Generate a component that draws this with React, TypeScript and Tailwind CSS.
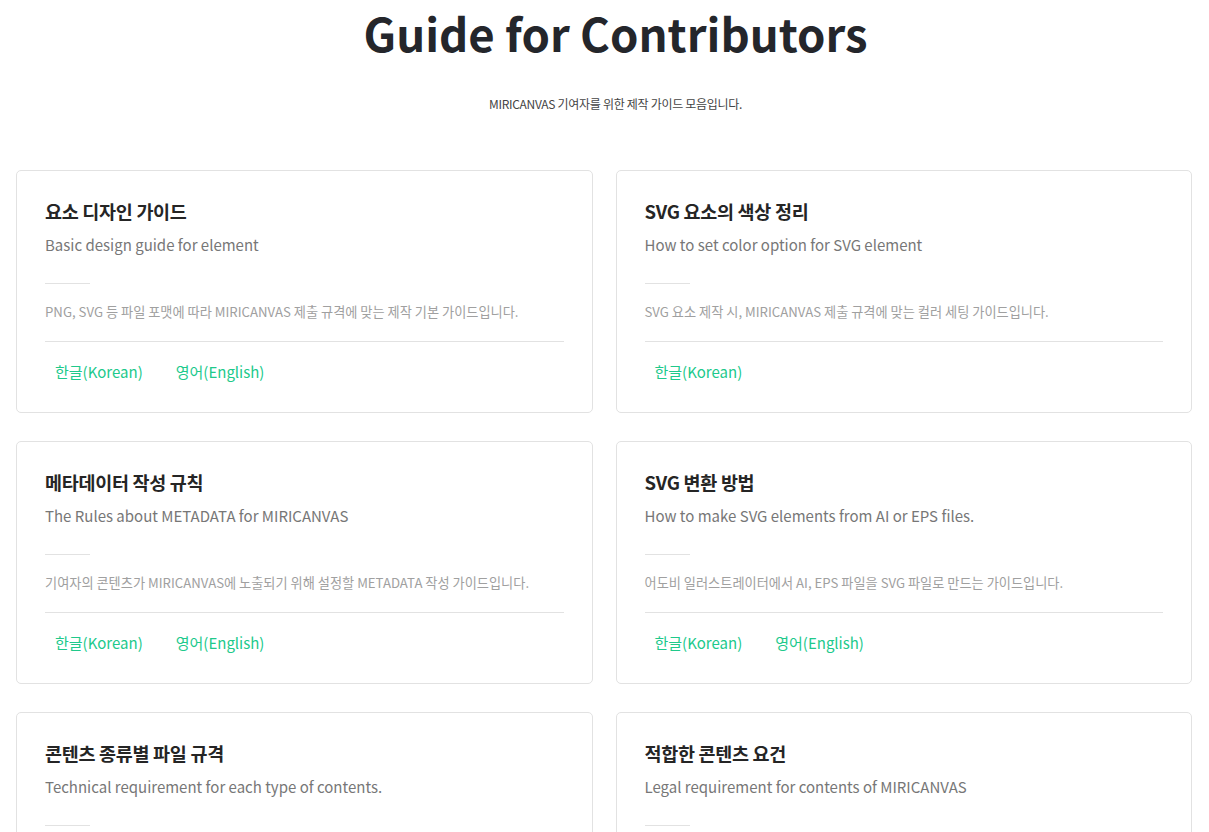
import React from "react";

type Guide = {
  title: string;
  subtitle: string;
  desc: string;
  links: string[];
};

const guides: Guide[] = [
  {
    title: "요소 디자인 가이드",
    subtitle: "Basic design guide for element",
    desc: "PNG, SVG 등 파일 포맷에 따라 MIRICANVAS 제출 규격에 맞는 제작 기본 가이드입니다.",
    links: ["한글(Korean)", "영어(English)"],
  },
  {
    title: "SVG 요소의 색상 정리",
    subtitle: "How to set color option for SVG element",
    desc: "SVG 요소 제작 시, MIRICANVAS 제출 규격에 맞는 컬러 세팅 가이드입니다.",
    links: ["한글(Korean)"],
  },
  {
    title: "메타데이터 작성 규칙",
    subtitle: "The Rules about METADATA for MIRICANVAS",
    desc: "기여자의 콘텐츠가 MIRICANVAS에 노출되기 위해 설정할 METADATA 작성 가이드입니다.",
    links: ["한글(Korean)", "영어(English)"],
  },
  {
    title: "SVG 변환 방법",
    subtitle: "How to make SVG elements from AI or EPS files.",
    desc: "어도비 일러스트레이터에서 AI, EPS 파일을 SVG 파일로 만드는 가이드입니다.",
    links: ["한글(Korean)", "영어(English)"],
  },
  {
    title: "콘텐츠 종류별 파일 규격",
    subtitle: "Technical requirement for each type of contents.",
    desc: "콘텐츠 종류에 따라 MIRICANVAS 제출 규격에 맞는 파일 규격 가이드입니다.",
    links: ["한글(Korean)", "영어(English)"],
  },
  {
    title: "적합한 콘텐츠 요건",
    subtitle: "Legal requirement for contents of MIRICANVAS",
    desc: "MIRICANVAS에 제출하기 적합한 콘텐츠의 법적 요건 가이드입니다.",
    links: ["한글(Korean)", "영어(English)"],
  },
];

function GuideCard({ guide }: { guide: Guide }) {
  return (
    <div className="border border-[#e2e2e2] rounded-[5px] bg-white px-[28px] pt-[27px] pb-[29px]">
      <h2 className="text-[18.5px] leading-[26px] font-bold text-[#252525] tracking-[-0.3px]">{guide.title}</h2>
      <p className="mt-[10px] text-[15px] leading-[22px] text-[#777]">{guide.subtitle}</p>
      <div className="mt-[27px] w-[45px] h-px bg-[#e2e2e2]" />
      <p className="mt-[19px] text-[13.2px] leading-[18px] text-[#a0a0a0]">{guide.desc}</p>
      <div className="mt-[20px] h-px bg-[#e2e2e2]" />
      <div className="mt-[19px] flex gap-[13px]">
        {guide.links.map((l) => (
          <a key={l} className="px-[10px] text-[15px] leading-[22px] text-[#20c98b] cursor-pointer">
            {l}
          </a>
        ))}
      </div>
    </div>
  );
}

export default function App() {
  return (
    <div
      className="min-h-screen bg-white"
      style={{ fontFamily: '"Noto Sans CJK KR", "Noto Sans", sans-serif' }}
    >
      <header className="text-center pl-[22px]">
        <h1 className="text-[45.5px] leading-[64px] font-bold text-[#24262b]">Guide for Contributors</h1>
        <p className="mt-[31px] text-[12px] leading-[18px] text-[#444] tracking-[-0.3px]">
          MIRICANVAS 기여자를 위한 제작 가이드 모음입니다.
        </p>
      </header>

      <main className="w-[1176px] ml-[16px] mt-[57px] grid grid-cols-2 gap-x-[23px] gap-y-[28px] pb-10">
        {guides.map((g) => (
          <GuideCard key={g.title} guide={g} />
        ))}
      </main>
    </div>
  );
}
